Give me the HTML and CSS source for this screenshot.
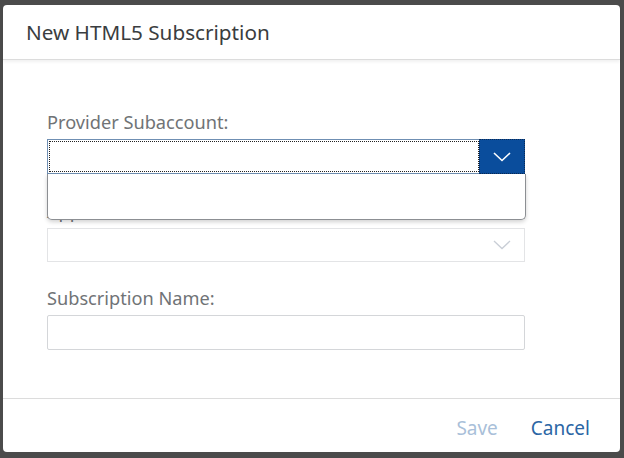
FILE: index.html
```html
<!DOCTYPE html>
<html lang="en">
<head>
    <meta charset="UTF-8">
    <meta name="viewport" content="width=device-width, initial-scale=1.0">
    <title>New HTML5 Subscription</title>
    <link rel="stylesheet" href="styles.css">
</head>
<body>
    <div class="dialog">
        <div class="dialog-header">New HTML5 Subscription</div>

        <div class="dialog-content">
            <label class="field-label">Provider Subaccount:</label>
            <div class="combo-wrap">
                <div class="combo focused">
                    <div class="combo-input"></div>
                    <div class="combo-arrow active">
                        <svg width="18" height="10" viewBox="0 0 18 10">
                            <polyline points="1,1 9,8.5 17,1" fill="none" stroke="#ffffff" stroke-width="1.6"/>
                        </svg>
                    </div>
                </div>
                <div class="popover"></div>
            </div>

            <label class="field-label gap">Application:</label>
            <div class="combo disabled">
                <div class="combo-input"></div>
                <div class="combo-arrow">
                    <svg width="18" height="10" viewBox="0 0 18 10">
                        <polyline points="1,1 9,8.5 17,1" fill="none" stroke="#c9ced6" stroke-width="1.3"/>
                    </svg>
                </div>
            </div>

            <label class="field-label gap">Subscription Name:</label>
            <input class="text-input" type="text">
        </div>

        <div class="dialog-footer">
            <button class="btn btn-disabled">Save</button>
            <button class="btn">Cancel</button>
        </div>
    </div>
</body>
</html>
```

FILE: styles.css
```css
body {
    margin: 0;
    height: 458px;
    background-color: #4b4b4b;
    font-family: "Noto Sans", "Open Sans", sans-serif;
}
.dialog {
    margin: 5px 4px 0 3px;
    width: 617px;
    height: 447px;
    background-color: #ffffff;
    border-radius: 4px;
    display: flex;
    flex-direction: column;
}
.dialog-header {
    height: 54px;
    padding-left: 23px;
    display: flex;
    align-items: center;
    font-size: 20.7px;
    color: #3a3d40;
    border-bottom: 1px solid #dcdcdc;
    box-shadow: 0 2px 3px rgba(0, 0, 0, 0.06);
}
.dialog-content {
    flex: 1;
    padding: 53px 95px 0 44px;
    display: flex;
    flex-direction: column;
}
.field-label {
    font-size: 18.2px;
    line-height: 18px;
    color: #707376;
    margin-bottom: 8px;
}
.field-label.gap {
    margin-top: 28px;
}
.field-label.gap:last-of-type {
    margin-top: 27px;
}
.combo-wrap {
    position: relative;
}
.combo {
    height: 35px;
    display: flex;
    box-sizing: border-box;
    border: 1px solid #d4d6d9;
    background-color: #ffffff;
}
.combo.focused {
    border-color: #6f8fb3;
}
.combo.disabled {
    height: 34px;
    border-color: #e3e4e6;
}
.combo-input {
    flex: 1;
}
.focused .combo-input {
    border: 1px dotted #222222;
    margin: 1px 0 1px 1px;
}
.combo-arrow {
    width: 44px;
    display: flex;
    justify-content: center;
    align-items: center;
}
.combo-arrow.active {
    background-color: #0a4d9c;
    border: 1px dotted #0b2a55;
    margin: -1px -1px -1px 0;
}
.popover {
    position: absolute;
    top: 35px;
    left: 0;
    right: -1px;
    height: 45px;
    background-color: #ffffff;
    border: 1px solid #8c8f93;
    border-top: none;
    border-radius: 0 0 5px 5px;
    box-shadow: 0 2px 4px rgba(0, 0, 0, 0.18);
}
.text-input {
    height: 35px;
    box-sizing: border-box;
    border: 1px solid #d4d6d9;
    border-radius: 2px;
    margin: 0;
}
.dialog-footer {
    height: 54px;
    box-sizing: border-box;
    padding-top: 5px;
    border-top: 1px solid #dcdcdc;
    display: flex;
    justify-content: flex-end;
    align-items: center;
    padding-right: 26px;
    gap: 25px;
}
.btn {
    background: none;
    border: none;
    font-family: inherit;
    font-size: 19px;
    color: #2b66a5;
    padding: 0 4px;
    cursor: pointer;
}
.btn-disabled {
    color: #a9bfd9;
}
```
